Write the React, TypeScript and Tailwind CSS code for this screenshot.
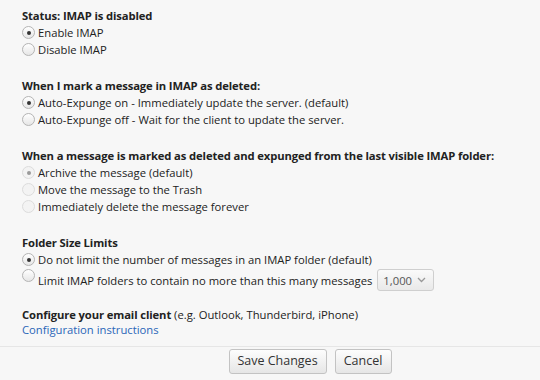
function Radio({ checked = false, disabled = false }: { checked?: boolean; disabled?: boolean }) {
  return (
    <span
      className={`inline-flex h-[13px] w-[13px] shrink-0 items-center justify-center rounded-full border ${
        disabled ? "border-[#dcdcdc] bg-[#f3f3f3]" : "border-[#b4b4b4] bg-gradient-to-b from-white to-[#e6e6e6]"
      }`}
    >
      {checked && <span className={`h-[4px] w-[4px] rounded-full ${disabled ? "bg-[#9a9a9a]" : "bg-[#333]"}`} />}
    </span>
  );
}

function Option({ label, checked, disabled }: { label: string; checked?: boolean; disabled?: boolean }) {
  return (
    <div className="flex items-center gap-[3px]">
      <Radio checked={checked} disabled={disabled} />
      <span>{label}</span>
    </div>
  );
}

function Section({ title, children }: { title: React.ReactNode; children: React.ReactNode }) {
  return (
    <div className="flex flex-col">
      <div className="font-bold leading-[17px] tracking-[-0.12px]">{title}</div>
      <div className="flex flex-col leading-[17px]">{children}</div>
    </div>
  );
}

export default function App() {
  return (
    <div
      className="h-[380px] w-[540px] overflow-hidden bg-[#f7f7f7] text-[11.25px] text-[#222]"
      style={{ fontFamily: '"Open Sans", "Noto Sans", sans-serif' }}
    >
      <div className="flex flex-col gap-[19px] px-[22px] pt-[7px]">
        <Section title="Status: IMAP is disabled">
          <Option label="Enable IMAP" checked />
          <Option label="Disable IMAP" />
        </Section>

        <Section title="When I mark a message in IMAP as deleted:">
          <Option label="Auto-Expunge on - Immediately update the server. (default)" checked />
          <Option label="Auto-Expunge off - Wait for the client to update the server." />
        </Section>

        <Section title="When a message is marked as deleted and expunged from the last visible IMAP folder:">
          <Option label="Archive the message (default)" checked disabled />
          <Option label="Move the message to the Trash" disabled />
          <Option label="Immediately delete the message forever" disabled />
        </Section>

        <Section title="Folder Size Limits">
          <Option label="Do not limit the number of messages in an IMAP folder (default)" checked />
          <div className="flex items-start gap-[3px]">
            <span className="mt-[1px]">
              <Radio />
            </span>
            <span className="mt-[4px]">Limit IMAP folders to contain no more than this many messages</span>
            <span className="ml-[2px] mt-[1px] flex h-[22px] w-[57px] items-center justify-between rounded-[3px] border border-[#cfcfcf] bg-gradient-to-b from-[#fafafa] to-[#e9e9e9] pl-[5px] pr-[7px] text-[#555]">
              <span>1,000</span>
              <svg width="9" height="6" viewBox="0 0 9 6" fill="none" stroke="#999" strokeWidth="1.3">
                <path d="M1 1l3.5 3.5L8 1" />
              </svg>
            </span>
          </div>
        </Section>

        <div className="-mt-[3px] leading-[15px]">
          <div>
            <span className="font-bold tracking-[-0.12px]">Configure your email client</span> (e.g. Outlook, Thunderbird,
            iPhone)
          </div>
          <a className="text-[#2a66b8]" href="#">
            Configuration instructions
          </a>
        </div>
      </div>

      <div className="mt-[9px] flex justify-center gap-[8px] border-t border-[#e6e6e6] pl-[80px] pt-[2px]">
        <button className="h-[25px] w-[98px] rounded-[3px] border border-[#c3c3c3] bg-gradient-to-b from-[#fdfdfd] to-[#e6e6e6] text-[12.5px] text-[#333]">
          Save Changes
        </button>
        <button className="h-[25px] w-[57px] rounded-[3px] border border-[#c3c3c3] bg-gradient-to-b from-[#fdfdfd] to-[#e6e6e6] text-[12.5px] text-[#333]">
          Cancel
        </button>
      </div>
    </div>
  );
}
